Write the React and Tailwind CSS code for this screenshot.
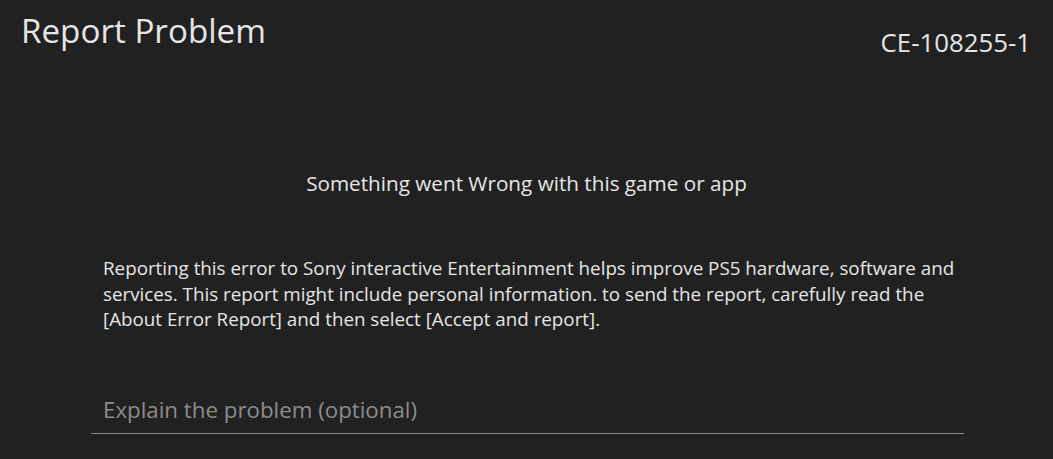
import React from 'react';

const App = () => {
  return (
    <div className="w-[1053px] h-[459px] overflow-hidden bg-[#212121] text-[#e6e6e6] font-['Open_Sans',sans-serif]">
      <div className="flex items-start justify-between pl-[21px] pr-[22px]">
        <h1 className="text-[33.2px] leading-[44px] mt-[9px]">Report Problem</h1>
        <div className="text-[25.8px] leading-[32px] mt-[26px]">CE-108255-1</div>
      </div>

      <div className="mt-[111px] text-center text-[20.7px] leading-[28px]">
        Something went Wrong with this game or app
      </div>

      <div className="mt-[59px] pl-[103px] pr-[80px]">
        <p className="text-[18.8px] leading-[25.5px]">
          Reporting this error to Sony interactive Entertainment helps improve PS5 hardware, software and services. This report might include personal information. to send the report, carefully read the [About Error Report] and then select [Accept and report].
        </p>
      </div>

      <div className="mt-[62px] ml-[91px] w-[873px] border-b border-[#8a8a8a] pl-[12px] pb-[8px]">
        <div className="text-[22.3px] leading-[30px] text-[#8c8c8c]">Explain the problem (optional)</div>
      </div>
    </div>
  );
};

export default App;
